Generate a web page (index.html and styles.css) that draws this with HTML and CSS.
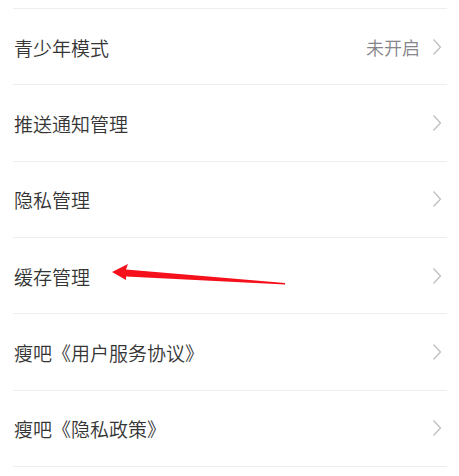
FILE: index.html
```html
<!DOCTYPE html>
<html lang="zh-CN">
<head>
<meta charset="utf-8">
<link rel="stylesheet" href="styles.css">
</head>
<body>
<div class="list">
  <div class="row"><span class="label">青少年模式</span><span class="value">未开启</span><svg class="chev" viewBox="0 0 10 18" width="10" height="18"><polyline points="1.5,1.5 8.5,9 1.5,16.5"/></svg></div>
  <div class="row"><span class="label">推送通知管理</span><svg class="chev" viewBox="0 0 10 18" width="10" height="18"><polyline points="1.5,1.5 8.5,9 1.5,16.5"/></svg></div>
  <div class="row"><span class="label">隐私管理</span><svg class="chev" viewBox="0 0 10 18" width="10" height="18"><polyline points="1.5,1.5 8.5,9 1.5,16.5"/></svg></div>
  <div class="row"><span class="label">缓存管理</span><svg class="chev" viewBox="0 0 10 18" width="10" height="18"><polyline points="1.5,1.5 8.5,9 1.5,16.5"/></svg></div>
  <div class="row"><span class="label">瘦吧《用户服务协议》</span><svg class="chev" viewBox="0 0 10 18" width="10" height="18"><polyline points="1.5,1.5 8.5,9 1.5,16.5"/></svg></div>
  <div class="row"><span class="label">瘦吧《隐私政策》</span><svg class="chev" viewBox="0 0 10 18" width="10" height="18"><polyline points="1.5,1.5 8.5,9 1.5,16.5"/></svg></div>
</div>
<svg class="arrow" viewBox="0 0 459 476" width="459" height="476">
  <polygon points="112,272 128,264 126,269.5 285,283 285,284.6 126,276.5 126,280"/>
</svg>
</body>
</html>
```

FILE: styles.css
```css
html, body {
  margin: 0;
  padding: 0;
  background: #ffffff;
}
body {
  position: relative;
  width: 459px;
  height: 476px;
  overflow: hidden;
  font-family: "Noto Sans CJK SC", "Noto Sans", sans-serif;
}
.list {
  padding-top: 8px;
  margin-left: 13px;
  width: 434px;
}
.row {
  display: flex;
  align-items: center;
  height: 75.33px;
  border-top: 1px solid #eeeeee;
  padding-left: 1px;
  padding-right: 5px;
}
.row:last-child {
  border-bottom: 1px solid #eeeeee;
}
.label {
  flex: 1;
  font-size: 19px;
  font-weight: 350;
  color: #353535;
  line-height: 1;
  padding-top: 1px;
}
.value {
  font-size: 18px;
  font-weight: 350;
  color: #85858a;
  margin-right: 12px;
  line-height: 1;
}
.chev {
  display: block;
  fill: none;
  stroke: #bfbfc3;
  stroke-width: 1.3;
}
.arrow {
  position: absolute;
  left: 0;
  top: 0;
  pointer-events: none;
}
.arrow polygon {
  fill: #f5101c;
}
```
